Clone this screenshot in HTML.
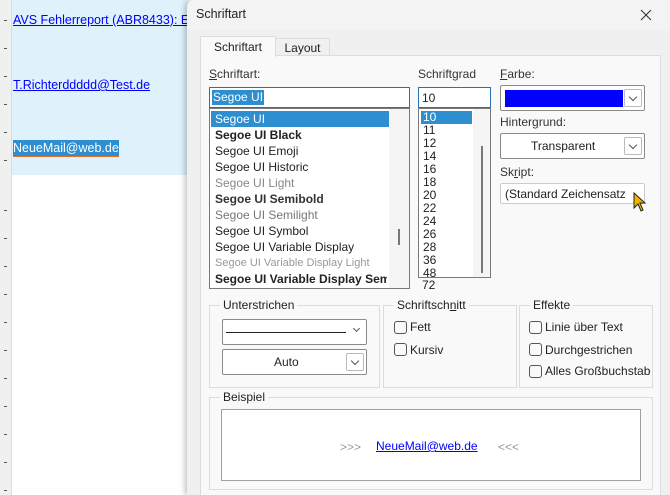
<!DOCTYPE html>
<html><head><meta charset="utf-8"><style>
*{box-sizing:border-box;margin:0;padding:0}
body{width:670px;height:495px;overflow:hidden;position:relative;background:#fff;font-family:"Liberation Sans","DejaVu Sans",sans-serif;font-size:12px;color:#222}
.a{position:absolute}
.ruler{left:0;top:0;width:12px;height:495px;background:#f0f0f0;border-right:1px solid #ddd}
.tick{position:absolute;left:4px;width:3px;height:1px;background:#555}
.page{left:12px;top:0;width:176px;height:175px;background:#dff1fb}
.lnk{color:#00f;text-decoration:underline;font-size:12.5px}
.dlg{left:187px;top:0;width:483px;height:495px;background:#f0f0f0;box-shadow:-2px 0 6px rgba(0,0,0,.25);border-radius:7px 0 0 0;overflow:hidden}
.title{left:0;top:0;width:483px;height:30px;background:#f3f3f3;border-radius:7px 0 0 0}
.panel{left:13px;top:55px;width:461px;height:445px;background:#f9f9f9;border:1px solid #dcdcdc}
.box{background:#fff;border:1px solid #7a7a7a}
.lb{font-size:12px;color:#333}
.item{position:absolute;left:5px;font-size:12px;white-space:nowrap;height:16px;line-height:16px}
.num{position:absolute;left:4px;font-size:12px;line-height:13px}
.combo{background:#fff;border:1px solid #8a8a8a;border-radius:2px}
.dd{position:absolute;right:2px;top:2px;bottom:2px;width:18px;border:1px solid #bbb;border-radius:2px;background:#fff}
.dd:after{content:"";position:absolute;left:5px;top:4px;width:5px;height:5px;border-right:1px solid #555;border-bottom:1px solid #555;transform:rotate(45deg)}
.grp{border:1px solid #dcdcdc}
.gl{position:absolute;top:-8px;left:10px;background:#f9f9f9;padding:0 3px;font-size:12px;white-space:nowrap}
.cb{position:absolute;width:13px;height:13px;border:1px solid #555;border-radius:3px;background:#f9f9f9}
</style></head><body>
<div class="a ruler">
<div class="tick" style="top:20px"></div><div class="tick" style="top:48px"></div><div class="tick" style="top:76px"></div><div class="tick" style="top:104px"></div><div class="tick" style="top:132px"></div><div class="tick" style="top:160px"></div><div class="tick" style="top:210px"></div><div class="tick" style="top:238px"></div><div class="tick" style="top:266px"></div><div class="tick" style="top:294px"></div><div class="tick" style="top:322px"></div><div class="tick" style="top:350px"></div><div class="tick" style="top:378px"></div><div class="tick" style="top:406px"></div><div class="tick" style="top:434px"></div><div class="tick" style="top:462px"></div><div class="tick" style="top:490px"></div>
</div>
<div class="a page"></div>
<div class="a lnk" style="left:13px;top:13px;white-space:nowrap">AVS Fehlerreport (ABR8433): E</div>
<div class="a lnk" style="left:13px;top:78px">T.Richterddddd@Test.de</div>
<div class="a" style="left:13px;top:140px;background:#2e8fd0;color:#fff;font-size:12.5px;padding:1px 0;border-bottom:1px solid #e07030">NeueMail@web.de</div>

<div class="a dlg">
<div class="a title"><span class="a" style="left:9px;top:7px;font-size:12.5px">Schriftart</span>
<svg class="a" style="left:453px;top:9px" width="12" height="12" viewBox="0 0 12 12"><path d="M1 1L11 11M11 1L1 11" stroke="#333" stroke-width="1.1"/></svg></div>
<div class="a" style="left:13px;top:36px;width:76px;height:21px;background:#f9f9f9;border:1px solid #dcdcdc;border-bottom:none;z-index:2;text-align:center;line-height:20px">Schriftart</div>
<div class="a" style="left:88px;top:38px;width:55px;height:18px;background:#f0f0f0;border:1px solid #dcdcdc;text-align:center;line-height:18px">Layout</div>
<div class="a panel"></div>

<span class="a lb" style="left:22px;top:67px"><u>S</u>chriftart:</span>
<div class="a box" style="left:22px;top:87px;width:201px;height:21px;border-color:#2a6fb8"><span style="position:absolute;left:2px;top:2px;background:#2e8fd0;color:#fff;padding:0 1px;line-height:15px">Segoe UI</span></div>
<div class="a box" style="left:22px;top:108px;width:201px;height:181px">
<div class="a" style="left:1px;top:2px;width:178px;height:16px;background:#2e8fd0"></div>
<div class="item" style="top:2px;color:#fff">Segoe UI</div>
<div class="item" style="top:18px;font-weight:bold">Segoe UI Black</div>
<div class="item" style="top:34px">Segoe UI Emoji</div>
<div class="item" style="top:50px">Segoe UI Historic</div>
<div class="item" style="top:66px;color:#888">Segoe UI Light</div>
<div class="item" style="top:82px;font-weight:bold;color:#333">Segoe UI Semibold</div>
<div class="item" style="top:98px;color:#777">Segoe UI Semilight</div>
<div class="item" style="top:114px">Segoe UI Symbol</div>
<div class="item" style="top:130px">Segoe UI Variable Display</div>
<div class="item" style="top:146px;color:#999;font-size:11px">Segoe UI Variable Display Light</div>
<div class="item" style="top:162px;font-weight:bold;width:172px;overflow:hidden">Segoe UI Variable Display Semibold</div>
<div class="a" style="left:179px;top:0;width:20px;height:179px;background:#f5f5f5"></div>
<div class="a" style="left:188px;top:120px;width:2px;height:16px;background:#777"></div>
</div>

<span class="a lb" style="left:231px;top:67px">Schriftgrad</span>
<div class="a box" style="left:231px;top:87px;width:73px;height:21px;border-color:#2a6fb8"><span style="position:absolute;left:3px;top:3px">10</span></div>
<div class="a box" style="left:231px;top:108px;width:73px;height:170px;overflow:hidden">
<div class="a" style="left:2px;top:2px;width:51px;height:13px;background:#2e8fd0"></div>
<div class="num" style="top:2px;color:#fff">10</div><div class="num" style="top:15px">11</div><div class="num" style="top:28px">12</div><div class="num" style="top:41px">14</div><div class="num" style="top:54px">16</div><div class="num" style="top:67px">18</div><div class="num" style="top:80px">20</div><div class="num" style="top:93px">22</div><div class="num" style="top:106px">24</div><div class="num" style="top:119px">26</div><div class="num" style="top:132px">28</div><div class="num" style="top:145px">36</div><div class="num" style="top:158px">48</div>
<div class="a" style="left:54px;top:0;width:17px;height:168px;background:#f5f5f5"></div>
<div class="a" style="left:62px;top:37px;width:2px;height:127px;background:#777"></div>
</div>
<div class="num a" style="left:235px;top:279px">72</div>

<span class="a lb" style="left:313px;top:67px"><u>F</u>arbe:</span>
<div class="a combo" style="left:313px;top:85px;width:145px;height:26px"><div class="a" style="left:4px;top:4px;width:118px;height:17px;background:#0000ff"></div><div class="dd" style="top:3px;bottom:3px"></div></div>
<span class="a lb" style="left:313px;top:115px">Hinter<u>g</u>rund:</span>
<div class="a combo" style="left:313px;top:133px;width:145px;height:26px"><span class="a" style="left:30px;top:5px">Transparent</span><div class="dd" style="top:3px;bottom:3px"></div></div>
<span class="a lb" style="left:313px;top:165px">Sk<u>r</u>ipt:</span>
<div class="a combo" style="left:313px;top:183px;width:145px;height:21px;border-color:#ccc"><span class="a" style="left:4px;top:3px;white-space:nowrap;width:120px;overflow:hidden">(Standard Zeichensatz)</span></div>
<svg class="a" style="left:446px;top:192px" width="14" height="22" viewBox="0 0 14 22"><path d="M1 1 L1 16 L5 12 L8 19 L10 18 L7 11 L12 11 Z" fill="#f0b400" stroke="#222" stroke-width="1"/></svg>

<div class="a grp" style="left:22px;top:305px;width:171px;height:83px"><span class="gl">Unterstrichen</span>
<div class="a combo" style="left:12px;top:13px;width:145px;height:26px"><div class="a" style="left:3px;top:12px;width:120px;height:1px;background:#222"></div><div class="a" style="left:131px;top:6px;width:5px;height:5px;border-right:1px solid #555;border-bottom:1px solid #555;transform:rotate(45deg)"></div></div>
<div class="a combo" style="left:12px;top:43px;width:145px;height:26px"><span class="a" style="left:51px;top:5px">Auto</span><div class="dd" style="top:3px;bottom:3px"></div></div>
</div>
<div class="a grp" style="left:196px;top:305px;width:134px;height:83px"><span class="gl">Schriftsch<u>n</u>itt</span>
<div class="cb" style="left:10px;top:15px"></div><span class="a" style="left:26px;top:14px">Fett</span>
<div class="cb" style="left:10px;top:37px"></div><span class="a" style="left:26px;top:37px">Kursiv</span>
</div>
<div class="a grp" style="left:332px;top:305px;width:134px;height:83px"><span class="gl">Effekte</span>
<div class="cb" style="left:9px;top:15px"></div><span class="a" style="left:25px;top:14px;white-space:nowrap">Linie über Text</span>
<div class="cb" style="left:9px;top:37px"></div><span class="a" style="left:25px;top:37px;white-space:nowrap">Durchgestrichen</span>
<div class="cb" style="left:9px;top:59px"></div><span class="a" style="left:25px;top:58px;white-space:nowrap;width:106px;overflow:hidden">Alles Großbuchstaben</span>
</div>
<div class="a grp" style="left:22px;top:397px;width:444px;height:93px"><span class="gl">Beispiel</span>
<div class="a" style="left:11px;top:11px;width:420px;height:72px;background:#fff;border:1px solid #a0a0a0">
<span class="a" style="left:118px;top:30px;color:#999">&gt;&gt;&gt;</span>
<span class="a" style="left:154px;top:29px;color:#00f;text-decoration:underline">NeueMail@web.de</span>
<span class="a" style="left:276px;top:30px;color:#999">&lt;&lt;&lt;</span>
</div></div>
</div>
</body></html>
